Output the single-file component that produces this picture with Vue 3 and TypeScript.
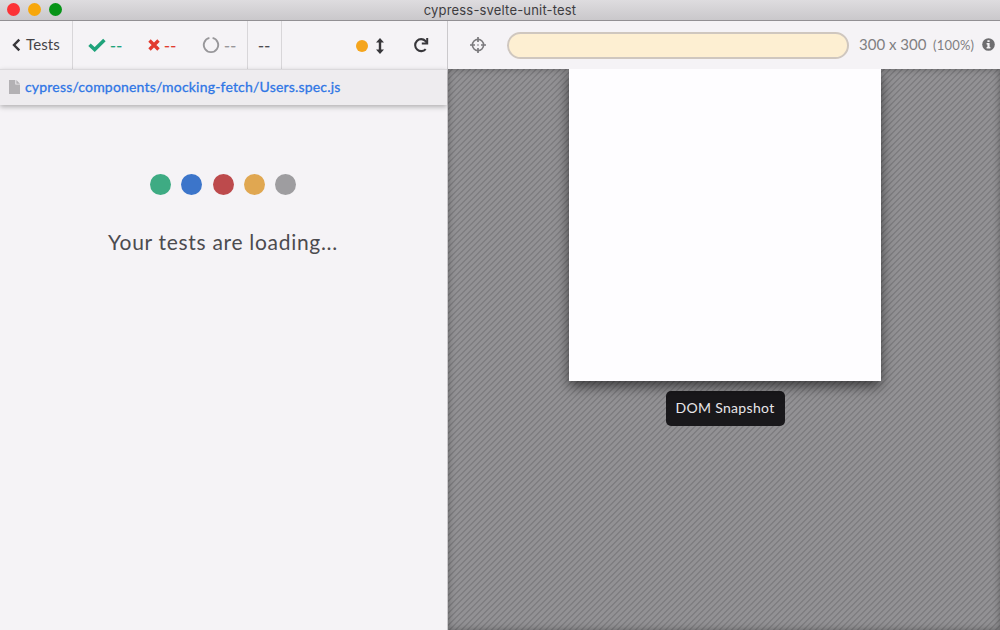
<script setup lang="ts">
interface Dot {
  name: string
}

const dots: Dot[] = [
  { name: 'green' },
  { name: 'blue' },
  { name: 'red' },
  { name: 'amber' },
  { name: 'gray' },
]
const specPath: string = 'cypress/components/mocking-fetch/Users.spec.js'
const viewport = { width: 300, height: 300, scale: 100 }
</script>

<template>
  <div class="window">
    <header class="titlebar">
      <div class="lights">
        <span class="light close"></span>
        <span class="light minimize"></span>
        <span class="light expand"></span>
      </div>
      <span class="title">cypress-svelte-unit-test</span>
    </header>

    <main class="body">
      <section class="reporter">
        <div class="toolbar">
          <button class="tests">
            <svg width="9" height="14" viewBox="0 0 9 14"><path d="M7.3 1.6 2 7l5.3 5.4" fill="none" stroke="#38373b" stroke-width="2.4" /></svg>
            <span class="tests-label">Tests</span>
          </button>
          <div class="stats">
            <span class="stat passed">
              <svg width="18" height="14" viewBox="0 0 18 14"><path d="M1.5 6.7 6.7 11.6 16.4 1.9" fill="none" stroke="currentColor" stroke-width="3.5" /></svg>
              <span class="dashes">--</span>
            </span>
            <span class="stat failed">
              <svg width="12" height="12" viewBox="0 0 12 12"><path d="M1.5 1.5 10.5 10.5M10.5 1.5 1.5 10.5" fill="none" stroke="currentColor" stroke-width="3.4" /></svg>
              <span class="dashes">--</span>
            </span>
            <span class="stat pending">
              <svg width="18" height="18" viewBox="0 0 18 18"><path d="M7.4 1.9a7.2 7.2 0 1 0 3.2 0" fill="none" stroke="currentColor" stroke-width="1.9" /></svg>
              <span class="dashes">--</span>
            </span>
          </div>
          <div class="duration"><span class="dashes">--</span></div>
          <div class="controls">
            <span class="scroll-dot"></span>
            <svg class="arrows" width="8" height="16" viewBox="0 0 8 16"><path d="M4 0 8 4.5H5.2v7H8L4 16 0 11.5h2.8v-7H0z" fill="#38373b" /></svg>
            <svg class="reload" width="16" height="16" viewBox="0 0 16 16"><path d="M12.7 12.1A6 6 0 1 1 12.5 4L14 5.7" fill="none" stroke="#38373b" stroke-width="2.1" /><path d="M14.2 1v5.6H8.8" fill="none" stroke="#38373b" stroke-width="2" /></svg>
          </div>
        </div>
        <div class="spec">
          <svg width="11" height="14" viewBox="0 0 11 14"><path d="M0 0h6.3v4.6H11V14H0z" fill="#b3b1b4" /><path d="M7.3 0 11 3.7H7.3z" fill="#b3b1b4" /></svg>
          <a class="path">{{ specPath }}</a>
        </div>
        <div class="loading">
          <div class="dots">
            <span v-for="dot in dots" :key="dot.name" class="dot" :class="dot.name"></span>
          </div>
          <p class="message">Your tests are loading...</p>
        </div>
      </section>

      <section class="runner">
        <div class="urlbar">
          <svg class="target" width="16" height="16" viewBox="0 0 16 16" fill="none" stroke="#7b7a7d"><circle cx="8" cy="8" r="5.6" stroke-width="1.6" /><path d="M8 0v5M8 11v5M0 8h5M11 8h5" stroke-width="1.7" /><circle cx="8" cy="8" r=".8" fill="#7b7a7d" stroke="none" /></svg>
          <div class="url"></div>
          <span class="size">{{ viewport.width }} x {{ viewport.height }}</span>
          <span class="scale">({{ viewport.scale }}%)</span>
          <svg class="info" width="13" height="13" viewBox="0 0 13 13"><circle cx="6.5" cy="6.5" r="6.3" fill="#6e6d70" /><path d="M5.4 2.2h2.2v1.9H5.4zM4.6 5.1h3v4h.8v1.3H4.6V9.1h.8V6.4h-.8z" fill="#f5f3f6" /></svg>
        </div>
        <div class="stage">
          <div class="frame"></div>
          <div class="snapshot"><span class="snapshot-label">DOM Snapshot</span></div>
        </div>
      </section>
    </main>
  </div>
</template>

<style>
body {
  margin: 0;
  overflow: hidden;
}
</style>

<style scoped>
* {
  box-sizing: border-box;
}
.window {
  width: 1000px;
  height: 630px;
  display: flex;
  flex-direction: column;
  overflow: hidden;
  background: #f5f3f6;
  color: #4c4b4f;
  font-family: Lato, "Liberation Sans", sans-serif;
}
svg {
  display: block;
  flex: none;
}
.titlebar {
  height: 21px;
  flex: none;
  display: grid;
  grid-template-columns: 100px 1fr 100px;
  align-items: center;
  background: linear-gradient(#dedcdf, #cac8cb);
  border-bottom: 1px solid #929094;
}
.lights {
  display: flex;
  gap: 8px;
  padding-left: 7px;
  margin-top: -2px;
}
.light {
  width: 13px;
  height: 13px;
  border-radius: 50%;
}
.close { background: #fc3236; }
.minimize { background: #f7a70b; }
.expand { background: #079418; }
.title {
  text-align: center;
  font: 13px/18px Inter, "Liberation Sans", sans-serif;
  letter-spacing: 0.18px;
  color: #3d3c3f;
}
.body {
  flex: 1;
  display: flex;
  min-height: 0;
}
.reporter {
  width: 448px;
  flex: none;
  border-right: 1px solid #cbc9cc;
  display: flex;
  flex-direction: column;
}
.toolbar {
  height: 48px;
  flex: none;
  display: flex;
}
.tests {
  width: 73px;
  padding: 0 0 0 12px;
  border: 0;
  border-right: 1px solid #d8d6d9;
  background: none;
  display: flex;
  align-items: center;
  gap: 5px;
  color: #444347;
  font: 15px/20px Lato, sans-serif;
}
.tests-label {
  margin-top: -2px;
  letter-spacing: 0.1px;
}
.stats {
  width: 175px;
  display: flex;
  align-items: center;
  border-right: 1px solid #d8d6d9;
  padding-left: 15px;
}
.stat {
  display: flex;
  align-items: center;
  gap: 4px;
}
.dashes {
  width: 13px;
  font-size: 16px;
  line-height: 18px;
  letter-spacing: 0.2px;
  -webkit-text-stroke: 0.25px currentColor;
}
.passed { color: #1fa37b; }
.failed { color: #e23a2e; margin-left: 25px; }
.pending { color: #98979a; margin-left: 25px; }
.duration {
  width: 34px;
  display: flex;
  align-items: center;
  justify-content: center;
  border-right: 1px solid #d8d6d9;
}
.controls {
  flex: 1;
  display: flex;
  align-items: center;
  padding-left: 74px;
}
.scroll-dot {
  width: 12px;
  height: 12px;
  border-radius: 50%;
  background: #f5a51d;
  margin-top: 1px;
}
.arrows { margin-left: 8px; margin-top: 1px; }
.reload { margin-left: 29px; }
.spec {
  height: 36px;
  flex: none;
  display: flex;
  align-items: center;
  padding-left: 9px;
  gap: 5px;
  background: #eeecef;
  border-top: 1px solid #dbd9dc;
  box-shadow: 0 2px 5px rgba(0, 0, 0, 0.28);
}
.spec svg { margin-top: -2px; }
.path {
  color: #2f76e5;
  font-size: 14px;
  line-height: 20px;
  letter-spacing: 0.19px;
  margin-top: -1px;
  -webkit-text-stroke: 0.3px currentColor;
}
.loading {
  display: flex;
  flex-direction: column;
  align-items: center;
  padding: 69px 1px 0 0;
}
.dots {
  display: flex;
  gap: 10.3px;
}
.dot {
  width: 21px;
  height: 21px;
  border-radius: 50%;
}
.green { background: #3eab83; }
.blue { background: #3c75ca; }
.red { background: #bd4a4c; }
.amber { background: #e0a751; }
.gray { background: #9e9da0; }
.message {
  margin: 32px 0 0;
  font-size: 21px;
  line-height: 30px;
  letter-spacing: 0.7px;
  white-space: nowrap;
}
.runner {
  flex: 1;
  min-width: 0;
  display: flex;
  flex-direction: column;
}
.urlbar {
  height: 48px;
  flex: none;
  display: flex;
  align-items: center;
  padding: 0 5px 0 22px;
  color: #807f82;
}
.target { margin-top: -1px; }
.url {
  width: 342px;
  height: 27px;
  margin-left: 21px;
  border: 2px solid #cfc7bf;
  border-radius: 14px;
  background: #fdefd2;
}
.size {
  width: 69px;
  margin: -2px 0 0 10px;
  font-size: 15px;
  white-space: nowrap;
}
.scale {
  width: 43px;
  margin-left: 5px;
  font-size: 13px;
  letter-spacing: 0.2px;
  white-space: nowrap;
}
.info { margin-left: 6px; margin-top: -2px; }
.stage {
  flex: 1;
  display: flex;
  flex-direction: column;
  align-items: center;
  background: repeating-linear-gradient(135deg, #929194 0, #929194 2px, #7c7b7e 2.9px, #7c7b7e 3.3px, #929194 4.243px);
  box-shadow: inset 0 0 7px rgba(0, 0, 0, 0.35);
}
.frame {
  width: 312px;
  height: 312px;
  margin-left: 2px;
  background: #fefdff;
  box-shadow: 0 5px 12px rgba(0, 0, 0, 0.6);
  clip-path: inset(0 -30px -30px -30px);
}
.snapshot {
  width: 119px;
  height: 35px;
  margin: 10px 0 0 2px;
  border-radius: 5px;
  background: #19181b;
  color: #e8e6e9;
  display: flex;
  align-items: center;
  justify-content: center;
  font-size: 14px;
  letter-spacing: 0.33px;
}
.snapshot-label { margin-top: -2px; }
</style>
